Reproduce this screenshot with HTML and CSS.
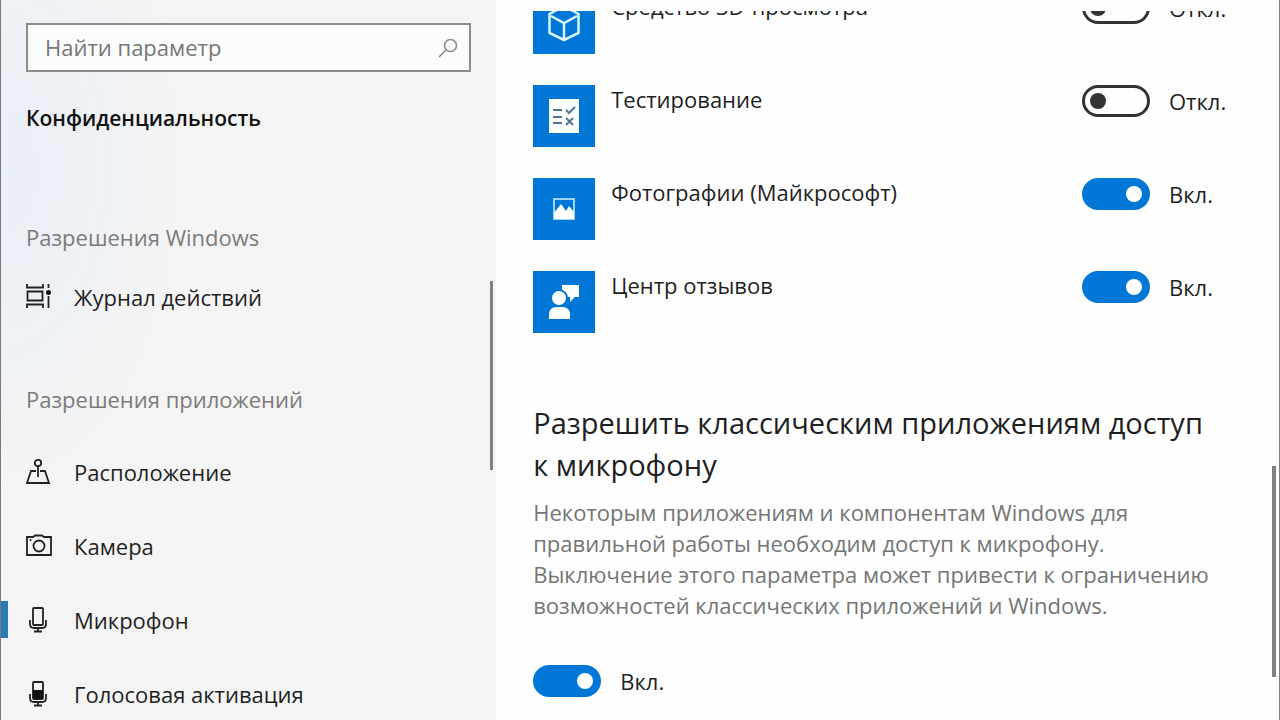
FILE: index.html
```html
<!DOCTYPE html>
<html lang="ru">
<head>
<meta charset="UTF-8" />
<meta name="viewport" content="width=device-width, initial-scale=1" />
<title>Параметры</title>
<link rel="stylesheet" href="styles.css">
</head>
<body>

<div class="window">
  <aside class="sidebar">
    <form class="search">
      <input type="search" id="search" placeholder="Найти параметр" aria-label="Найти параметр" />
      <button type="submit" aria-label="Поиск">
        <svg width="20" height="20" viewBox="0 0 20 20"><circle cx="12.5" cy="7.5" r="6" /><path d="M8.2 11.8L1 19" /></svg>
      </button>
    </form>

    <h1>Конфиденциальность</h1>

    <nav>
      <h2>Разрешения Windows</h2>
      <ul>
        <li><a href="#activity">
          <svg width="26" height="26" viewBox="0 0 26 26"><path d="M1 0v3.500h16V0M1 24v-3.500h16V24M1.500 7.500h15v9h-15zM22.500 0v4M22.500 12v12" /><circle class="fill" cx="22.500" cy="8.500" r="2.500" /></svg>
          Журнал действий
        </a></li>
      </ul>

      <h2>Разрешения приложений</h2>
      <ul>
        <li><a href="#location">
          <svg width="26" height="26" viewBox="0 0 26 26"><circle cx="12" cy="4" r="3.200" /><path d="M12 7v11M10 12H5L1 24h22L19 12h-5" /></svg>
          Расположение
        </a></li>
        <li><a href="#camera">
          <svg width="26" height="26" viewBox="0 0 26 26"><path d="M1 4h6l2-1.500h7L18 4h7v18H1z" /><circle cx="13" cy="13" r="5.500" /><circle class="fill" cx="4.500" cy="7" r="1" /></svg>
          Камера
        </a></li>
        <li class="active"><a href="#microphone">
          <svg width="26" height="26" viewBox="0 0 26 26"><rect x="7" y="1" width="10" height="17" rx="1" /><path d="M4 13v4q0 4 4 4h8q4 0 4-4v-4M12 21v3M8 24.500h8" /></svg>
          Микрофон
        </a></li>
        <li><a href="#voice">
          <svg width="26" height="26" viewBox="0 0 26 26"><rect x="7" y="1" width="10" height="17" rx="1" /><path class="fill" d="M7 9h10v9H7z" /><path d="M4 13v4q0 4 4 4h8q4 0 4-4v-4M12 21v3M8 24.500h8" /></svg>
          Голосовая активация
        </a></li>
      </ul>
    </nav>
    <div class="scrollbar"></div>
  </aside>

  <main>
    <div class="content">
      <ul class="apps">
        <li>
          <svg class="tile" viewBox="0 0 62 62"><path class="line" d="M31 14l14.500 8v19L31 48l-14.500-7V22zM31 48V31M18 24l13 7 13-7" /></svg>
          <label for="viewer">Средство 3D-просмотра</label>
          <div class="switch"><input type="checkbox" role="switch" id="viewer" /><span>Откл.</span></div>
        </li>
        <li>
          <svg class="tile" viewBox="0 0 62 62"><path d="M16 14h30v34H16z" /><path class="mark" d="M20 25h9M20 32h9M20 38h9M33 25l3 3 6-6M33 33l7 7M40 33l-7 7" /></svg>
          <label for="test">Тестирование</label>
          <div class="switch"><input type="checkbox" role="switch" id="test" /><span>Откл.</span></div>
        </li>
        <li>
          <svg class="tile" viewBox="0 0 62 62"><path class="line thin" d="M21 21h20v20H21z" /><path d="M21 35l7-9 5 7 3-5 5 6v7H21z" /></svg>
          <label for="photos">Фотографии (Майкрософт)</label>
          <div class="switch"><input type="checkbox" role="switch" id="photos" checked /><span>Вкл.</span></div>
        </li>
        <li>
          <svg class="tile" viewBox="0 0 62 62"><path d="M29 14h17v12h-4l-5 5v-5h-8z" /><circle class="head" cx="26" cy="27" r="8" /><path d="M16 48v-4q0-8 8-8h5q8 0 8 8v4z" /></svg>
          <label for="feedback">Центр отзывов</label>
          <div class="switch"><input type="checkbox" role="switch" id="feedback" checked /><span>Вкл.</span></div>
        </li>
      </ul>

      <section class="desktop-apps">
        <h2 id="desktop-title">Разрешить классическим приложениям доступ к&nbsp;микрофону</h2>
        <p>Некоторым приложениям и компонентам Windows для правильной работы необходим доступ к микрофону. Выключение этого параметра может привести к ограничению возможностей классических приложений и Windows.</p>
        <div class="switch"><input type="checkbox" role="switch" id="desktop" aria-labelledby="desktop-title" checked /><label for="desktop">Вкл.</label></div>
      </section>
    </div>
    <div class="scrollbar"></div>
  </main>
</div>

</body>
</html>
```
FILE: styles.css
```css
* {
  box-sizing: border-box;
}
body {
  margin: 0;
  font-family: "Segoe UI", "Open Sans", "Noto Sans", sans-serif;
  font-size: 22px;
  line-height: 28px;
  color: #1f1f1f;
  background: #fefefe;
}
h1, h2, p, ul {
  margin: 0;
  padding: 0;
  font-weight: normal;
}
ul {
  list-style: none;
}
.window {
  display: grid;
  grid-template-columns: 31fr 49fr;
  height: 100vh;
  overflow: hidden;
  border-left: 1px solid #77797c;
  border-right: 1px solid #808080;
}

/* sidebar */
.sidebar {
  position: relative;
  overflow: hidden;
  padding: 23px 25px 0 25px;
  background: radial-gradient(ellipse 190px 330px at 0 170px, #e9eff7, #f4f4f4);
}
.search {
  display: flex;
  align-items: center;
  height: 49px;
  border: 2px solid #8c8c8c;
  background: #fbfcfc;
}
.search input {
  flex: 1;
  min-width: 0;
  height: 43px;
  padding: 0 0 2px 17px;
  border: 0;
  outline: 0;
  background: none;
  font: inherit;
}
.search input::placeholder {
  color: #767676;
  opacity: 1;
}
.search button {
  display: flex;
  padding: 0 11px;
  border: 0;
  background: none;
}
.search svg {
  fill: none;
  stroke: #8a8a8a;
  stroke-width: 1.6;
}
.sidebar h1 {
  margin-top: 32px;
  font-size: 21px;
  font-weight: 600;
  color: #111;
}
.sidebar h2 {
  font-size: 22px;
  color: #7b7b7b;
}
nav {
  margin-top: 91px;
}
nav ul {
  margin: 9px 0 51px;
}
nav ul + h2 + ul {
  margin-top: 22px;
}
nav li {
  position: relative;
}
nav a {
  display: flex;
  align-items: center;
  gap: 22px;
  height: 74px;
  color: inherit;
  text-decoration: none;
  white-space: nowrap;
}
nav svg {
  flex: none;
  fill: none;
  stroke: #222;
  stroke-width: 1.8;
}
nav svg .fill {
  fill: #111;
  stroke: none;
}
nav .active::before {
  content: "";
  position: absolute;
  top: 18px;
  left: -26px;
  width: 8px;
  height: 37px;
  background: #2a7ab5;
}
.scrollbar {
  position: absolute;
  background: #808080;
}
.sidebar .scrollbar {
  top: 39%;
  right: 3px;
  width: 3px;
  height: 189px;
}

/* app list */
main {
  position: relative;
  padding: 11px 16px 0 37px;
  overflow: hidden;
}
main .scrollbar {
  right: 3px;
  bottom: 6%;
  width: 4px;
  height: 211px;
}
.content {
  height: 100%;
  overflow: hidden;
}
.apps {
  display: grid;
  gap: 31px;
  margin-top: -19px;
}
.apps li {
  display: grid;
  grid-template-columns: 62px 1fr 181px;
  column-gap: 16px;
  align-items: start;
}
.tile {
  width: 62px;
  height: 62px;
  background: #0077d7;
  fill: #fff;
}
.tile .line {
  fill: none;
  stroke: #d8f6ff;
  stroke-width: 2.5;
}
.tile .thin {
  stroke-width: 1.5;
}
.tile .mark {
  fill: none;
  stroke: #4d7791;
  stroke-width: 2;
}
.tile .head {
  stroke: #0077d7;
  stroke-width: 2;
}
.switch {
  display: flex;
  align-items: center;
  gap: 19px;
  height: 32px;
}
.switch input {
  appearance: none;
  display: flex;
  align-items: center;
  width: 68px;
  height: 32px;
  margin: 0;
  padding: 0 5px;
  border: 3px solid #333;
  border-radius: 16px;
}
.switch input::before {
  content: "";
  width: 16px;
  height: 16px;
  border-radius: 50%;
  background: #333;
}
.switch input:checked {
  justify-content: flex-end;
  border-color: #0077d7;
  background: #0077d7;
}
.switch input:checked::before {
  background: #fff;
}

/* desktop apps */
.desktop-apps {
  max-width: 690px;
  margin-top: 69px;
}
.desktop-apps h2 {
  font-size: 29px;
  line-height: 42px;
}
.desktop-apps p {
  margin: 11px 0 44px;
  line-height: 31px;
  color: #757575;
}
```
